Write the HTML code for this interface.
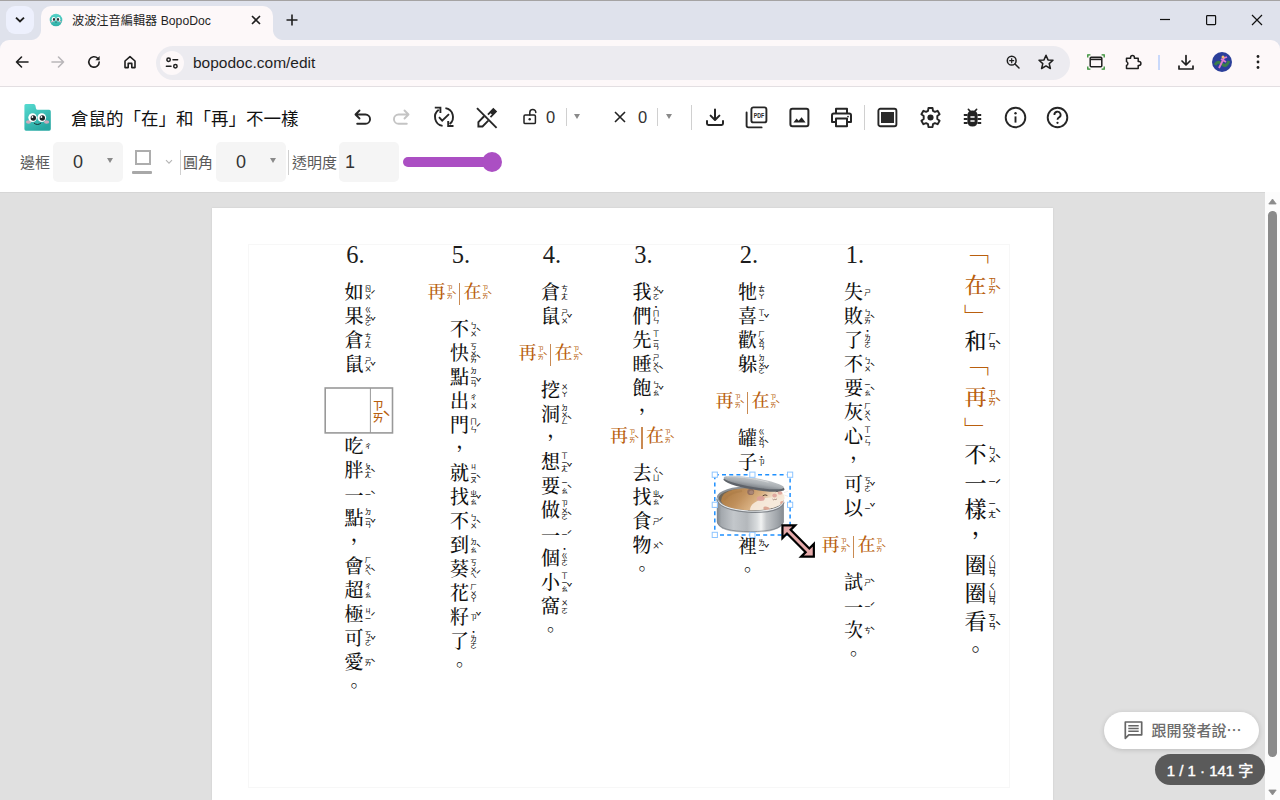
<!DOCTYPE html>
<html lang="zh-Hant">
<head>
<meta charset="utf-8">
<title>波波注音編輯器 BopoDoc</title>
<style>
*{box-sizing:border-box;margin:0;padding:0}
html,body{width:1280px;height:800px;overflow:hidden;background:#e0e0e0;font-family:"Liberation Sans","Noto Sans CJK TC",sans-serif;color:#202124}
.abs{position:absolute}
#tabstrip{position:absolute;left:0;top:0;width:1280px;height:52px;background:#dfe2ec}
#topline{position:absolute;left:0;top:0;width:1280px;height:1px;background:#a5a3a3}
#tabsearch{position:absolute;left:6px;top:6px;width:28px;height:28px;border-radius:9px;background:#edf0fd}
#tab{position:absolute;left:41px;top:6px;width:232px;height:35px;background:#fdf8f9;border-radius:10px 10px 0 0}
#tab:before,#tab:after{content:"";position:absolute;bottom:1px;width:10px;height:10px;background:radial-gradient(circle at 0 0,rgba(0,0,0,0) 9.5px,#fdf8f9 10.5px)}
#tab:before{left:-10px}
#tab:after{right:-10px;transform:scaleX(-1)}
#tabtitle{position:absolute;left:31px;top:7px;font-size:12.2px;line-height:16px;color:#1f1f1f;white-space:nowrap}
#toolbar{position:absolute;left:0;top:40px;width:1280px;height:46px;background:#fdf8f9;border-radius:9px 9px 0 0}
#tbline{position:absolute;left:0;top:86px;width:1280px;height:1px;background:#e3dfe2}
#omni{position:absolute;left:156px;top:46px;width:914px;height:34px;border-radius:17px;background:#ecebf0}
#sitechip{position:absolute;left:160px;top:51px;width:24px;height:24px;border-radius:12px;background:#fdf8f9}
#url{position:absolute;left:193px;top:53px;font-size:15.5px;line-height:20px;color:#1f1f1f;white-space:nowrap}
#app{position:absolute;left:0;top:87px;width:1280px;height:105px;background:#fff}
#appline{position:absolute;left:0;top:192px;width:1280px;height:1px;background:#d6d6d6}
#doctitle{position:absolute;left:71px;top:106px;font-size:17.5px;line-height:26px;color:#111;white-space:nowrap}
svg{position:absolute;overflow:visible}
.ic{fill:none;stroke:#1f1f1f;stroke-width:1.6;stroke-linecap:round;stroke-linejoin:round}
.lbl{position:absolute;font-size:15px;line-height:20px;color:#5a5a5a;white-space:nowrap}
.box{position:absolute;background:#f5f5f5;border-radius:5px}
.num{position:absolute;font-size:18px;line-height:22px;color:#333}
.tri{position:absolute;width:0;height:0;border-left:3.5px solid transparent;border-right:3.5px solid transparent;border-top:5px solid #8a8a8a}
.vsep{position:absolute;width:1px;background:#d0d0d0}
/*canvas*/
#page{position:absolute;left:212px;top:208px;width:841px;height:592px;background:#fff;box-shadow:0 0 2px rgba(0,0,0,.09)}
#margin{position:absolute;left:248px;top:244px;width:762px;height:544px;border:1px solid #f7f7f7}
.h{position:absolute;text-align:center;white-space:nowrap;font-family:"Liberation Serif","Noto Serif CJK SC",serif;font-weight:500}
.h.v{writing-mode:vertical-rl}
.n{position:absolute;width:40px;height:30px;text-align:center;font:24.5px/30px "Liberation Serif",serif;color:#1c1c1c}
.z{position:absolute;display:block;word-break:break-all;white-space:normal;text-align:center;font-family:"Noto Sans CJK TC","Noto Serif CJK SC",sans-serif}
.t{position:absolute;display:block;text-align:left;white-space:nowrap;font-family:"Noto Sans CJK TC","Noto Serif CJK SC",sans-serif}
#sbar{position:absolute;left:1265px;top:192px;width:15px;height:608px;background:#fcfcfc}
#sthumb{position:absolute;left:1268px;top:211px;width:8.7px;height:546px;border-radius:4.4px;background:#8b8b8b}
#chat{position:absolute;left:1104px;top:712px;width:155px;height:37px;border-radius:18.5px;background:#fff;box-shadow:0 1px 5px rgba(0,0,0,.16)}
#chat span{position:absolute;left:47.5px;top:8.5px;font-size:15px;line-height:20px;color:#6c6c6c;font-weight:500;white-space:nowrap}
#count{position:absolute;left:1155px;top:754px;width:110px;height:31px;border-radius:15.5px;background:#5a5a5a;color:#fff;font-size:15px;font-weight:400;-webkit-text-stroke:0.4px #fff;line-height:33.5px;text-align:center;white-space:nowrap}
</style>
</head>
<body>
<div id="tabstrip"></div>
<div id="topline"></div>
<div id="tabsearch"></div>
<svg style="left:14px;top:15px" width="12" height="10" viewBox="0 0 12 10"><path d="M2 2.6 L6 6.4 L10 2.6" fill="none" stroke="#1f1f1f" stroke-width="1.9"/></svg>
<div id="tab">
  <svg style="left:8.300px;top:7.200px" width="14" height="14" viewBox="0 0 14 14"><defs><linearGradient id="fv" x1="0" y1="0" x2="0" y2="1"><stop offset="0" stop-color="#57d3c9"/><stop offset="1" stop-color="#2fb0a8"/></linearGradient></defs><circle cx="7" cy="7" r="6.300" fill="url(#fv)"/><ellipse cx="4.700" cy="6.200" rx="2" ry="2.300" fill="#fff"/><ellipse cx="9.300" cy="6.200" rx="2" ry="2.300" fill="#fff"/><ellipse cx="5" cy="6.500" rx="1.100" ry="1.400" fill="#2b3135"/><ellipse cx="9" cy="6.500" rx="1.100" ry="1.400" fill="#2b3135"/><ellipse cx="2.800" cy="8.600" rx="1.300" ry="0.800" fill="#f0b7c6" opacity="0.800"/><ellipse cx="11.200" cy="8.600" rx="1.300" ry="0.800" fill="#f0b7c6" opacity="0.800"/><path d="M6.200 9 Q7 9.800 7.800 9" fill="none" stroke="#2b3135" stroke-width="0.500"/></svg>
  <div id="tabtitle">波波注音編輯器 BopoDoc</div>
  <svg style="left:209px;top:8px" width="12" height="12" viewBox="0 0 12 12"><path d="M2 2 L10 10 M10 2 L2 10" fill="none" stroke="#1f1f1f" stroke-width="1.6"/></svg>
</div>
<svg style="left:285px;top:13px" width="14" height="14" viewBox="0 0 14 14"><path d="M7 1.5 V12.5 M1.5 7 H12.5" fill="none" stroke="#1f1f1f" stroke-width="1.6"/></svg>
<!-- window controls -->
<svg style="left:1159px;top:14px" width="12" height="12" viewBox="0 0 12 12"><path d="M1 5.5 H11" stroke="#111" stroke-width="1.2" fill="none"/></svg>
<svg style="left:1205px;top:14px" width="12" height="12" viewBox="0 0 12 12"><rect x="1.6" y="1.6" width="9" height="9" rx="0.8" stroke="#111" stroke-width="1.2" fill="none"/></svg>
<svg style="left:1251px;top:14px" width="12" height="12" viewBox="0 0 12 12"><path d="M1 1 L11 11 M11 1 L1 11" stroke="#111" stroke-width="1.2" fill="none"/></svg>

<div id="toolbar"></div>
<div id="tbline"></div>
<!-- nav icons -->
<svg style="left:14px;top:54px" width="16" height="16" viewBox="0 0 16 16"><path class="ic" d="M14 8 H2.5 M7.5 3 L2.5 8 L7.5 13"/></svg>
<svg style="left:50px;top:54px" width="16" height="16" viewBox="0 0 16 16"><path class="ic" style="stroke:#b9b6b9" d="M2 8 H13.5 M8.5 3 L13.5 8 L8.5 13"/></svg>
<svg style="left:86px;top:54px" width="16" height="16" viewBox="0 0 16 16"><path class="ic" d="M13.2 8 A5.2 5.2 0 1 1 11.7 4.3"/><path d="M13.6 2 V6.2 H9.4 Z" fill="#1f1f1f"/></svg>
<svg style="left:122px;top:54px" width="16" height="16" viewBox="0 0 16 16"><path class="ic" d="M3 7 L8 2.6 L13 7 V13.6 H9.8 V9.4 H6.2 V13.6 H3 Z"/></svg>
<div id="omni"></div>
<div id="sitechip"></div>
<svg style="left:165px;top:56px" width="14" height="14" viewBox="0 0 14 14"><g fill="none" stroke="#1f1f1f" stroke-width="1.5" stroke-linecap="round"><circle cx="3.6" cy="3.8" r="1.7"/><path d="M8 3.8 H12.6"/><circle cx="10.4" cy="10.2" r="1.7"/><path d="M1.4 10.2 H6"/></g></svg>
<div id="url">bopodoc.com/edit</div>
<!-- omnibox right icons -->
<svg style="left:1005px;top:54px" width="16" height="16" viewBox="0 0 16 16"><g fill="none" stroke="#1f1f1f" stroke-width="1.5" stroke-linecap="round"><circle cx="6.7" cy="6.7" r="4.4"/><path d="M10 10 L14 14"/><path d="M4.7 6.7 H8.7 M6.7 4.7 V8.7" stroke-width="1.2"/></g></svg>
<svg style="left:1037px;top:53px" width="18" height="18" viewBox="0 0 18 18"><path class="ic" style="stroke-width:1.5" d="M9 2.2 L11 6.9 L16 7.3 L12.2 10.6 L13.4 15.5 L9 12.9 L4.6 15.5 L5.8 10.6 L2 7.3 L7 6.9 Z"/></svg>
<svg style="left:1087px;top:54px" width="18" height="16" viewBox="0 0 18 16"><rect x="3.2" y="3.2" width="11.6" height="9.6" rx="1" fill="none" stroke="#1f1f1f" stroke-width="1.5"/><path d="M3.2 5.4 H14.8" stroke="#1f1f1f" stroke-width="1.6"/><path d="M0.8 3.4 V0.8 H3.4 M14.6 0.8 H17.2 V3.4 M17.2 12.6 V15.2 H14.6 M3.4 15.2 H0.8 V12.6" fill="none" stroke="#2e8b2e" stroke-width="1.3"/></svg>
<svg style="left:1124px;top:53px" width="18" height="18" viewBox="0 0 18 18"><path class="ic" style="stroke-width:1.5" d="M2.5 5.2 H6.6 V4.4 A1.9 1.9 0 0 1 10.4 4.4 V5.2 H14.2 V8.6 H15 A1.9 1.9 0 0 1 15 12.4 H14.2 V15.6 H2.5 V12.4 A2 2 0 0 0 2.5 8.6 Z"/></svg>
<div class="abs" style="left:1158px;top:55px;width:2px;height:15px;background:#c9d9fb"></div>
<svg style="left:1177px;top:54px" width="18" height="17" viewBox="0 0 18 17"><path class="ic" style="stroke-width:1.7" d="M9 1.5 V10.5 M5 7 L9 11 L13 7 M2 12 V15 H16 V12"/></svg>
<svg style="left:1212px;top:52px" width="20" height="20" viewBox="0 0 20 20"><circle cx="10" cy="10" r="10" fill="#2b3f9a"/><path d="M3 13 Q6 8 10 12 T17 9" stroke="#3c7f4a" stroke-width="3" fill="none"/><path d="M7 16 L12 6 M9 7 L14 10 M12 6 L15 5" stroke="#e07ad0" stroke-width="1.8" fill="none"/><circle cx="11" cy="5" r="1.5" fill="#f0c070"/></svg>
<svg style="left:1256px;top:54px" width="4" height="16" viewBox="0 0 4 16"><circle cx="2" cy="2.5" r="1.4" fill="#1f1f1f"/><circle cx="2" cy="8" r="1.4" fill="#1f1f1f"/><circle cx="2" cy="13.5" r="1.4" fill="#1f1f1f"/></svg>

<div id="app"></div>
<div id="appline"></div>
<!-- app header row 1 -->
<svg style="left:24px;top:103px" width="28" height="29" viewBox="0 0 28 29">
<defs><linearGradient id="lg" x1="0" y1="0" x2="0.6" y2="1"><stop offset="0" stop-color="#56dbd0"/><stop offset="1" stop-color="#27a7a2"/></linearGradient></defs>
<path d="M1.8 1 H9.6 Q11 1 11.4 2.6 L12 5.4 Q12.3 6.8 13.6 6.8 H25.2 Q26.8 6.8 26.8 8.4 V26 Q26.8 27.8 25.2 27.8 H2 Q0.4 27.8 0.4 26 V2.6 Q0.4 1 1.8 1 Z" fill="url(#lg)"/>
<ellipse cx="4.5" cy="19" rx="2.6" ry="1.7" fill="#e7a9bd" opacity="0.85"/><ellipse cx="22.6" cy="19" rx="2.6" ry="1.7" fill="#e7a9bd" opacity="0.85"/>
<circle cx="8.6" cy="14.6" r="4.3" fill="#fff"/><circle cx="17.8" cy="14.6" r="4.3" fill="#fff"/>
<circle cx="9.3" cy="15" r="2.7" fill="#1d2428"/><circle cx="18.3" cy="15" r="2.7" fill="#1d2428"/>
<circle cx="8.4" cy="14" r="0.9" fill="#fff"/><circle cx="17.4" cy="14" r="0.9" fill="#fff"/>
<path d="M10.2 20.2 Q13.4 23 16.8 20.2" fill="none" stroke="#1d2428" stroke-width="0.9" stroke-linecap="round"/>
</svg>
<div id="doctitle">倉鼠的「在」和「再」不一樣</div>
<!-- undo / redo -->
<svg style="left:353px;top:108px" width="20" height="20" viewBox="0 0 20 20"><path d="M6.5 2.5 L2.5 6.5 L6.5 10.5 M2.8 6.5 H12.4 A4.6 4.6 0 0 1 12.4 15.8 H4.2" fill="none" stroke="#262626" stroke-width="1.9" stroke-linecap="round" stroke-linejoin="round"/></svg>
<svg style="left:391px;top:108px" width="20" height="20" viewBox="0 0 20 20"><path d="M13.5 2.5 L17.5 6.5 L13.5 10.5 M17.2 6.5 H7.6 A4.6 4.6 0 0 0 7.6 15.8 H15.8" fill="none" stroke="#c4c4c4" stroke-width="1.9" stroke-linecap="round" stroke-linejoin="round"/></svg>
<!-- sync check -->
<svg style="left:432.3px;top:105.300px" width="24" height="24" viewBox="0 0 24 24"><g fill="none" stroke="#262626" stroke-width="1.900" stroke-linejoin="miter"><path d="M6.710 4.720 A9 9 0 0 0 10.590 20.890"/><path d="M13.410 3.110 A9 9 0 0 1 17.660 18.990"/><path d="M2.800 2.600 H8.400 V8"/><path d="M21.500 21 H16.200 V16"/><path d="M7 12.200 L10.200 15.600 L17 9.150"/></g></svg>
<!-- pen off -->
<svg style="left:475px;top:106px" width="24" height="24" viewBox="0 0 24 24"><g fill="none" stroke="#262626" stroke-width="1.900" stroke-linejoin="miter"><path d="M2 2.200 L21.600 21.800"/><path d="M9.100 10.250 L3.400 16.200 V20.500 H7.500 L13.300 14.700"/></g><path d="M18.300 1.700 L22.200 5.600 L16.100 11.700 L14.900 10.500 L16.900 8.500 L15.600 7.200 L13.600 9.200 L12.300 7.900 Z" fill="#262626"/></svg>
<!-- lock open -->
<svg style="left:523px;top:108px" width="16" height="17" viewBox="0 0 16 17"><g fill="none" stroke="#222" stroke-width="1.5" stroke-linejoin="round" stroke-linecap="round"><rect x="1" y="7" width="11.4" height="8.6" rx="1.2"/><path d="M6.8 7 V4.4 A3 3 0 0 1 12.8 4.4"/></g><circle cx="6.7" cy="11.3" r="1.2" fill="#222"/></svg>
<div class="num" style="left:546px;top:106px;font-size:16.5px;color:#333">0</div>
<div class="vsep" style="left:566px;top:108px;height:18px"></div>
<div class="tri" style="left:574px;top:114px"></div>
<svg style="left:614px;top:111px" width="12" height="12" viewBox="0 0 12 12"><path d="M1 1 L11 11 M11 1 L1 11" stroke="#222" stroke-width="1.6" fill="none"/></svg>
<div class="num" style="left:638px;top:106px;font-size:16.5px;color:#333">0</div>
<div class="vsep" style="left:657px;top:108px;height:18px"></div>
<div class="tri" style="left:666px;top:114px"></div>
<div class="vsep" style="left:691px;top:105px;height:25px"></div>
<!-- download -->
<svg style="left:705px;top:108px" width="20" height="20" viewBox="0 0 20 20"><path d="M10 1.6 V11.6 M5.6 7.6 L10 12 L14.4 7.6 M2 13 V15.6 Q2 17 3.4 17 H16.6 Q18 17 18 15.6 V13" fill="none" stroke="#262626" stroke-width="2" stroke-linecap="round" stroke-linejoin="round"/></svg>
<!-- pdf -->
<svg style="left:745px;top:106px" width="23" height="23" viewBox="0 0 23 23"><g fill="none" stroke="#262626" stroke-width="1.9" stroke-linecap="round" stroke-linejoin="round"><rect x="6.4" y="1.4" width="15" height="15" rx="2"/><path d="M1.6 6.4 V19.6 Q1.6 21.4 3.4 21.4 H16.6"/></g><text x="13.9" y="11.7" text-anchor="middle" font-family="Liberation Sans,sans-serif" font-weight="bold" font-size="7.4" fill="#262626" textLength="10.5" lengthAdjust="spacingAndGlyphs">PDF</text></svg>
<!-- image -->
<svg style="left:789px;top:107px" width="21" height="21" viewBox="0 0 21 21"><rect x="1.4" y="1.8" width="18" height="17.4" rx="2" fill="none" stroke="#262626" stroke-width="2"/><path d="M4.4 15.4 L7.6 11.4 L9.6 13.8 L12.6 10.2 L16.6 15.4 Z" fill="#222"/></svg>
<!-- print -->
<svg style="left:830px;top:107px" width="23" height="21" viewBox="0 0 23 21"><g fill="none" stroke="#262626" stroke-width="2" stroke-linejoin="round"><path d="M6 6.4 V1.8 H17 V6.4"/><path d="M6 15 H2 V8.4 Q2 6.6 3.8 6.6 H19.2 Q21 6.6 21 8.4 V15 H17"/><rect x="6" y="11.6" width="11" height="7.6"/></g><circle cx="18" cy="9.6" r="0.9" fill="#222"/></svg>
<div class="vsep" style="left:864px;top:105px;height:25px"></div>
<!-- fullscreen rect -->
<svg style="left:877px;top:107px" width="21" height="21" viewBox="0 0 21 21"><rect x="1.4" y="1.8" width="18" height="17.4" rx="2" fill="none" stroke="#262626" stroke-width="1.9"/><rect x="4" y="5" width="13" height="11" fill="#2a2a2a"/></svg>
<!-- gear -->
<svg style="left:919px;top:106px" width="23" height="23" viewBox="0 0 24 24"><path fill="none" stroke="#262626" stroke-width="2" stroke-linejoin="round" d="M9.9 2 H14.1 L14.6 5 L16.6 6.1 L19.4 5 L21.5 8.6 L19.1 10.5 V13.5 L21.5 15.4 L19.4 19 L16.6 17.9 L14.6 19 L14.1 22 H9.9 L9.4 19 L7.4 17.9 L4.6 19 L2.5 15.4 L4.9 13.5 V10.500 L2.5 8.6 L4.6 5 L7.4 6.1 L9.4 5 Z"/><circle cx="12" cy="12" r="3.2" fill="#222"/></svg>
<!-- bug -->
<svg style="left:963px;top:107px" width="19" height="21" viewBox="0 0 19 21"><path d="M5.4 2.4 L7.2 4.2 M13.6 2.4 L11.8 4.2" stroke="#222" stroke-width="1.6" fill="none" stroke-linecap="round"/><path d="M9.500 3.6 Q14.6 3.600 14.600 9 V14 Q14.6 19.6 9.500 19.600 Q4.4 19.6 4.400 14 V9 Q4.4 3.6 9.500 3.600 Z" fill="#222"/><path d="M0.800 8 H4.6 M0.800 12 H4.6 M0.800 16 H4.6 M14.4 8 H18.2 M14.4 12 H18.2 M14.4 16 H18.2" stroke="#262626" stroke-width="1.9" fill="none"/><path d="M7.4 10 H11.6 M7.4 14 H11.6" stroke="#fff" stroke-width="1.6" fill="none"/></svg>
<!-- info -->
<svg style="left:1004px;top:106px" width="23" height="23" viewBox="0 0 23 23"><circle cx="11.5" cy="11.500" r="9.8" fill="none" stroke="#262626" stroke-width="1.9"/><path d="M11.5 10.400 V16.600" stroke="#222" stroke-width="1.9" fill="none"/><circle cx="11.5" cy="7.2" r="1.2" fill="#222"/></svg>
<!-- help -->
<svg style="left:1046px;top:106px" width="23" height="23" viewBox="0 0 23 23"><circle cx="11.5" cy="11.500" r="9.8" fill="none" stroke="#262626" stroke-width="1.9"/><path d="M8.400 9 A3.100 3.100 0 1 1 12.800 11.600 Q11.5 12.400 11.500 13.800" stroke="#222" stroke-width="1.800" fill="none"/><circle cx="11.5" cy="16.800" r="1.150" fill="#222"/></svg>

<!-- app header row 2 -->
<div class="lbl" style="left:20px;top:153px">邊框</div>
<div class="box" style="left:53px;top:142px;width:70px;height:40px"></div>
<div class="num" style="left:73px;top:151px">0</div>
<div class="tri" style="left:107px;top:158px"></div>
<div class="abs" style="left:135px;top:150px;width:15.5px;height:14.5px;border:2px solid #adadad"></div>
<div class="abs" style="left:132px;top:171px;width:20px;height:3px;background:#a8a8a8;border-radius:1px"></div>
<svg style="left:165px;top:159px" width="8" height="6" viewBox="0 0 8 6"><path d="M1 1.200 L4 4.200 L7 1.200" fill="none" stroke="#b5b5b5" stroke-width="1.100"/></svg>
<div class="vsep" style="left:180px;top:150px;height:25px"></div>
<div class="lbl" style="left:183px;top:153px">圓角</div>
<div class="box" style="left:216px;top:142px;width:70px;height:40px"></div>
<div class="num" style="left:236px;top:151px">0</div>
<div class="tri" style="left:270px;top:158px"></div>
<div class="vsep" style="left:288px;top:150px;height:25px"></div>
<div class="lbl" style="left:292px;top:153px">透明度</div>
<div class="box" style="left:339px;top:142px;width:60px;height:40px"></div>
<div class="num" style="left:345px;top:151px">1</div>
<div class="abs" style="left:403px;top:157px;width:96px;height:10px;border-radius:5px;background:#ab4fc3"></div>
<div class="abs" style="left:482px;top:152px;width:20px;height:20px;border-radius:10px;background:#ab4fc3"></div>
<div id="page"></div>
<div id="margin"></div>
<div class="n" style="left:335.5px;top:239.5px">6.</div>
<div class="h" style="left:343.5px;top:282.2px;width:21px;height:21px;font-size:19px;line-height:21px;color:#111">如<span class="z" style="left:21.2px;top:1.7px;width:6.6px;font-size:6.6px;line-height:8px">ㄖㄨ</span><span class="t" style="left:26.4px;top:9px;font-size:9.9px;line-height:9.9px">ˊ</span></div>
<div class="h" style="left:343.5px;top:306.2px;width:21px;height:21px;font-size:19px;line-height:21px;color:#111">果<span class="z" style="left:21.2px;top:-0.2px;width:6.6px;font-size:6.6px;line-height:6.6px">ㄍㄨㄛ</span><span class="t" style="left:26.4px;top:11.9px;font-size:9.9px;line-height:9.9px">ˇ</span></div>
<div class="h" style="left:343.5px;top:330.2px;width:21px;height:21px;font-size:19px;line-height:21px;color:#111">倉<span class="z" style="left:21.2px;top:1.7px;width:6.6px;font-size:6.6px;line-height:8px">ㄘㄤ</span></div>
<div class="h" style="left:343.5px;top:354.2px;width:21px;height:21px;font-size:19px;line-height:21px;color:#111">鼠<span class="z" style="left:21.2px;top:1.7px;width:6.6px;font-size:6.6px;line-height:8px">ㄕㄨ</span><span class="t" style="left:26.4px;top:8.6px;font-size:9.9px;line-height:9.9px">ˇ</span></div>
<div class="h" style="left:343.5px;top:436.2px;width:21px;height:21px;font-size:19px;line-height:21px;color:#111">吃<span class="z" style="left:21.2px;top:5.7px;width:6.6px;font-size:6.6px;line-height:8px">ㄔ</span></div>
<div class="h" style="left:343.5px;top:460.2px;width:21px;height:21px;font-size:19px;line-height:21px;color:#111">胖<span class="z" style="left:21.2px;top:1.7px;width:6.6px;font-size:6.6px;line-height:8px">ㄆㄤ</span><span class="t" style="left:26.4px;top:8.8px;font-size:9.9px;line-height:9.9px">ˋ</span></div>
<div class="h" style="left:343.5px;top:485.5px;width:21px;height:21px;font-size:19px;line-height:21px;color:#111">一<span class="z" style="left:21.2px;top:4.4px;width:6.6px;font-size:6.6px;line-height:8px">ㄧ</span><span class="t" style="left:26.4px;top:5.1px;font-size:9.9px;line-height:9.9px">ˋ</span></div>
<div class="h" style="left:343.5px;top:508.2px;width:21px;height:21px;font-size:19px;line-height:21px;color:#111">點<span class="z" style="left:21.2px;top:-0.2px;width:6.6px;font-size:6.6px;line-height:6.6px">ㄉㄧㄢ</span><span class="t" style="left:26.4px;top:11.9px;font-size:9.9px;line-height:9.9px">ˇ</span></div>
<div class="h" style="left:350.1px;top:523.5px;width:21px;height:21px;font-size:19px;line-height:21px;color:#111">，</div>
<div class="h" style="left:343.5px;top:556.2px;width:21px;height:21px;font-size:19px;line-height:21px;color:#111">會<span class="z" style="left:21.2px;top:-0.2px;width:6.6px;font-size:6.6px;line-height:6.6px">ㄏㄨㄟ</span><span class="t" style="left:26.4px;top:12.1px;font-size:9.9px;line-height:9.9px">ˋ</span></div>
<div class="h" style="left:343.5px;top:580.2px;width:21px;height:21px;font-size:19px;line-height:21px;color:#111">超<span class="z" style="left:21.2px;top:1.7px;width:6.6px;font-size:6.6px;line-height:8px">ㄔㄠ</span></div>
<div class="h" style="left:343.5px;top:604.2px;width:21px;height:21px;font-size:19px;line-height:21px;color:#111">極<span class="z" style="left:21.2px;top:1.7px;width:6.6px;font-size:6.6px;line-height:8px">ㄐㄧ</span><span class="t" style="left:26.4px;top:9px;font-size:9.9px;line-height:9.9px">ˊ</span></div>
<div class="h" style="left:343.5px;top:628.2px;width:21px;height:21px;font-size:19px;line-height:21px;color:#111">可<span class="z" style="left:21.2px;top:1.7px;width:6.6px;font-size:6.6px;line-height:8px">ㄎㄜ</span><span class="t" style="left:26.4px;top:8.6px;font-size:9.9px;line-height:9.9px">ˇ</span></div>
<div class="h" style="left:343.5px;top:652.2px;width:21px;height:21px;font-size:19px;line-height:21px;color:#111">愛<span class="z" style="left:21.2px;top:5.7px;width:6.6px;font-size:6.6px;line-height:8px">ㄞ</span><span class="t" style="left:26.4px;top:6.4px;font-size:9.9px;line-height:9.9px">ˋ</span></div>
<div class="h" style="left:349.5px;top:670.3px;width:21px;height:21px;font-size:19px;line-height:21px;color:#111">。</div>
<svg style="left:320px;top:383px" width="80" height="56" viewBox="0 0 80 56"><rect x="5.2" y="5" width="67.3" height="44.9" fill="#fff" stroke="#999" stroke-width="1.6"/><path d="M50.4 5 V50" stroke="#999" stroke-width="1" fill="none"/></svg>
<div class="h" style="left:370px;top:388px;width:22px;height:46px;color:#b95f0e"><span class="z" style="left:2.6px;top:10.8px;width:11.2px;font-size:11.2px;line-height:12.3px">ㄗㄞ</span><span class="t" style="left:12px;top:21.1px;font-size:15px;line-height:15px">ˋ</span></div>
<div class="n" style="left:441px;top:239.5px">5.</div>
<div class="abs" style="left:458.6px;top:283px;width:1.7px;height:22px;background:#c98a52"></div>
<div class="h" style="left:426.5px;top:282.3px;width:20px;height:20px;font-size:18px;line-height:20px;color:#b95f0e">再<span class="z" style="left:20.2px;top:1.7px;width:6px;font-size:6px;line-height:7.6px">ㄗㄞ</span><span class="t" style="left:24.9px;top:8.5px;font-size:9px;line-height:9px">ˋ</span></div>
<div class="h" style="left:462.5px;top:282.3px;width:20px;height:20px;font-size:18px;line-height:20px;color:#b95f0e">在<span class="z" style="left:19.8px;top:1.7px;width:6px;font-size:6px;line-height:7.6px">ㄗㄞ</span><span class="t" style="left:24.5px;top:8.5px;font-size:9px;line-height:9px">ˋ</span></div>
<div class="h" style="left:449px;top:319.2px;width:21px;height:21px;font-size:19px;line-height:21px;color:#111">不<span class="z" style="left:21.2px;top:1.7px;width:6.6px;font-size:6.6px;line-height:8px">ㄅㄨ</span><span class="t" style="left:26.4px;top:8.8px;font-size:9.9px;line-height:9.9px">ˋ</span></div>
<div class="h" style="left:449px;top:343.2px;width:21px;height:21px;font-size:19px;line-height:21px;color:#111">快<span class="z" style="left:21.2px;top:-0.2px;width:6.6px;font-size:6.6px;line-height:6.6px">ㄎㄨㄞ</span><span class="t" style="left:26.4px;top:12.1px;font-size:9.9px;line-height:9.9px">ˋ</span></div>
<div class="h" style="left:449px;top:367.2px;width:21px;height:21px;font-size:19px;line-height:21px;color:#111">點<span class="z" style="left:21.2px;top:-0.2px;width:6.6px;font-size:6.6px;line-height:6.6px">ㄉㄧㄢ</span><span class="t" style="left:26.4px;top:11.9px;font-size:9.9px;line-height:9.9px">ˇ</span></div>
<div class="h" style="left:449px;top:391.2px;width:21px;height:21px;font-size:19px;line-height:21px;color:#111">出<span class="z" style="left:21.2px;top:1.7px;width:6.6px;font-size:6.6px;line-height:8px">ㄔㄨ</span></div>
<div class="h" style="left:449px;top:415.2px;width:21px;height:21px;font-size:19px;line-height:21px;color:#111">門<span class="z" style="left:21.2px;top:1.7px;width:6.6px;font-size:6.6px;line-height:8px">ㄇㄣ</span><span class="t" style="left:26.4px;top:9px;font-size:9.9px;line-height:9.9px">ˊ</span></div>
<div class="h" style="left:455.6px;top:430.5px;width:21px;height:21px;font-size:19px;line-height:21px;color:#111">，</div>
<div class="h" style="left:449px;top:463.2px;width:21px;height:21px;font-size:19px;line-height:21px;color:#111">就<span class="z" style="left:21.2px;top:-0.2px;width:6.6px;font-size:6.6px;line-height:6.6px">ㄐㄧㄡ</span><span class="t" style="left:26.4px;top:12.1px;font-size:9.9px;line-height:9.9px">ˋ</span></div>
<div class="h" style="left:449px;top:487.2px;width:21px;height:21px;font-size:19px;line-height:21px;color:#111">找<span class="z" style="left:21.2px;top:1.7px;width:6.6px;font-size:6.6px;line-height:8px">ㄓㄠ</span><span class="t" style="left:26.4px;top:8.6px;font-size:9.9px;line-height:9.9px">ˇ</span></div>
<div class="h" style="left:449px;top:511.2px;width:21px;height:21px;font-size:19px;line-height:21px;color:#111">不<span class="z" style="left:21.2px;top:1.7px;width:6.6px;font-size:6.6px;line-height:8px">ㄅㄨ</span><span class="t" style="left:26.4px;top:8.8px;font-size:9.9px;line-height:9.9px">ˋ</span></div>
<div class="h" style="left:449px;top:535.2px;width:21px;height:21px;font-size:19px;line-height:21px;color:#111">到<span class="z" style="left:21.2px;top:1.7px;width:6.6px;font-size:6.6px;line-height:8px">ㄉㄠ</span><span class="t" style="left:26.4px;top:8.8px;font-size:9.9px;line-height:9.9px">ˋ</span></div>
<div class="h" style="left:449px;top:559.2px;width:21px;height:21px;font-size:19px;line-height:21px;color:#111">葵<span class="z" style="left:21.2px;top:-0.2px;width:6.6px;font-size:6.6px;line-height:6.6px">ㄎㄨㄟ</span><span class="t" style="left:26.4px;top:12.3px;font-size:9.9px;line-height:9.9px">ˊ</span></div>
<div class="h" style="left:449px;top:583.2px;width:21px;height:21px;font-size:19px;line-height:21px;color:#111">花<span class="z" style="left:21.2px;top:-0.2px;width:6.6px;font-size:6.6px;line-height:6.6px">ㄏㄨㄚ</span></div>
<div class="h" style="left:449px;top:607.2px;width:21px;height:21px;font-size:19px;line-height:21px;color:#111">籽<span class="z" style="left:21.2px;top:5.7px;width:6.6px;font-size:6.6px;line-height:8px">ㄗ</span><span class="t" style="left:26.4px;top:6.2px;font-size:9.9px;line-height:9.9px">ˇ</span></div>
<div class="h" style="left:449px;top:631.2px;width:21px;height:21px;font-size:19px;line-height:21px;color:#111">了<span class="z" style="left:21.2px;top:3.7px;width:6.6px;font-size:6.6px;line-height:7.1px">ㄌㄜ</span><span class="t" style="left:22px;top:-2.8px;font-size:9.9px;line-height:9.9px">˙</span></div>
<div class="h" style="left:455px;top:649.3px;width:21px;height:21px;font-size:19px;line-height:21px;color:#111">。</div>
<div class="n" style="left:532px;top:239.5px">4.</div>
<div class="h" style="left:540px;top:282.2px;width:21px;height:21px;font-size:19px;line-height:21px;color:#111">倉<span class="z" style="left:21.2px;top:1.7px;width:6.6px;font-size:6.6px;line-height:8px">ㄘㄤ</span></div>
<div class="h" style="left:540px;top:306.2px;width:21px;height:21px;font-size:19px;line-height:21px;color:#111">鼠<span class="z" style="left:21.2px;top:1.7px;width:6.6px;font-size:6.6px;line-height:8px">ㄕㄨ</span><span class="t" style="left:26.4px;top:8.6px;font-size:9.9px;line-height:9.9px">ˇ</span></div>
<div class="abs" style="left:549.6px;top:344px;width:1.7px;height:22px;background:#c98a52"></div>
<div class="h" style="left:517.5px;top:343.3px;width:20px;height:20px;font-size:18px;line-height:20px;color:#b95f0e">再<span class="z" style="left:20.2px;top:1.7px;width:6px;font-size:6px;line-height:7.6px">ㄗㄞ</span><span class="t" style="left:24.9px;top:8.5px;font-size:9px;line-height:9px">ˋ</span></div>
<div class="h" style="left:553.5px;top:343.3px;width:20px;height:20px;font-size:18px;line-height:20px;color:#b95f0e">在<span class="z" style="left:19.8px;top:1.7px;width:6px;font-size:6px;line-height:7.6px">ㄗㄞ</span><span class="t" style="left:24.5px;top:8.5px;font-size:9px;line-height:9px">ˋ</span></div>
<div class="h" style="left:540px;top:380.2px;width:21px;height:21px;font-size:19px;line-height:21px;color:#111">挖<span class="z" style="left:21.2px;top:1.7px;width:6.6px;font-size:6.6px;line-height:8px">ㄨㄚ</span></div>
<div class="h" style="left:540px;top:404.2px;width:21px;height:21px;font-size:19px;line-height:21px;color:#111">洞<span class="z" style="left:21.2px;top:-0.2px;width:6.6px;font-size:6.6px;line-height:6.6px">ㄉㄨㄥ</span><span class="t" style="left:26.4px;top:12.1px;font-size:9.9px;line-height:9.9px">ˋ</span></div>
<div class="h" style="left:546.6px;top:419.5px;width:21px;height:21px;font-size:19px;line-height:21px;color:#111">，</div>
<div class="h" style="left:540px;top:452.2px;width:21px;height:21px;font-size:19px;line-height:21px;color:#111">想<span class="z" style="left:21.2px;top:-0.2px;width:6.6px;font-size:6.6px;line-height:6.6px">ㄒㄧㄤ</span><span class="t" style="left:26.4px;top:11.9px;font-size:9.9px;line-height:9.9px">ˇ</span></div>
<div class="h" style="left:540px;top:476.2px;width:21px;height:21px;font-size:19px;line-height:21px;color:#111">要<span class="z" style="left:21.2px;top:1.7px;width:6.6px;font-size:6.6px;line-height:8px">ㄧㄠ</span><span class="t" style="left:26.4px;top:8.8px;font-size:9.9px;line-height:9.9px">ˋ</span></div>
<div class="h" style="left:540px;top:500.2px;width:21px;height:21px;font-size:19px;line-height:21px;color:#111">做<span class="z" style="left:21.2px;top:-0.2px;width:6.6px;font-size:6.6px;line-height:6.6px">ㄗㄨㄛ</span><span class="t" style="left:26.4px;top:12.1px;font-size:9.9px;line-height:9.9px">ˋ</span></div>
<div class="h" style="left:540px;top:525.5px;width:21px;height:21px;font-size:19px;line-height:21px;color:#111">一<span class="z" style="left:21.2px;top:4.4px;width:6.6px;font-size:6.6px;line-height:8px">ㄧ</span><span class="t" style="left:26.4px;top:5.3px;font-size:9.9px;line-height:9.9px">ˊ</span></div>
<div class="h" style="left:540px;top:548.2px;width:21px;height:21px;font-size:19px;line-height:21px;color:#111">個<span class="z" style="left:21.2px;top:3.7px;width:6.6px;font-size:6.6px;line-height:7.1px">ㄍㄜ</span><span class="t" style="left:22px;top:-2.8px;font-size:9.9px;line-height:9.9px">˙</span></div>
<div class="h" style="left:540px;top:572.2px;width:21px;height:21px;font-size:19px;line-height:21px;color:#111">小<span class="z" style="left:21.2px;top:-0.2px;width:6.6px;font-size:6.6px;line-height:6.6px">ㄒㄧㄠ</span><span class="t" style="left:26.4px;top:11.9px;font-size:9.9px;line-height:9.9px">ˇ</span></div>
<div class="h" style="left:540px;top:596.2px;width:21px;height:21px;font-size:19px;line-height:21px;color:#111">窩<span class="z" style="left:21.2px;top:1.7px;width:6.6px;font-size:6.6px;line-height:8px">ㄨㄛ</span></div>
<div class="h" style="left:546px;top:614.3px;width:21px;height:21px;font-size:19px;line-height:21px;color:#111">。</div>
<div class="n" style="left:623.5px;top:239.5px">3.</div>
<div class="h" style="left:631.5px;top:282.2px;width:21px;height:21px;font-size:19px;line-height:21px;color:#111">我<span class="z" style="left:21.2px;top:1.7px;width:6.6px;font-size:6.6px;line-height:8px">ㄨㄛ</span><span class="t" style="left:26.4px;top:8.6px;font-size:9.9px;line-height:9.9px">ˇ</span></div>
<div class="h" style="left:631.5px;top:306.2px;width:21px;height:21px;font-size:19px;line-height:21px;color:#111">們<span class="z" style="left:21.2px;top:3.7px;width:6.6px;font-size:6.6px;line-height:7.1px">ㄇㄣ</span><span class="t" style="left:22px;top:-2.8px;font-size:9.9px;line-height:9.9px">˙</span></div>
<div class="h" style="left:631.5px;top:330.2px;width:21px;height:21px;font-size:19px;line-height:21px;color:#111">先<span class="z" style="left:21.2px;top:-0.2px;width:6.6px;font-size:6.6px;line-height:6.6px">ㄒㄧㄢ</span></div>
<div class="h" style="left:631.5px;top:354.2px;width:21px;height:21px;font-size:19px;line-height:21px;color:#111">睡<span class="z" style="left:21.2px;top:-0.2px;width:6.6px;font-size:6.6px;line-height:6.6px">ㄕㄨㄟ</span><span class="t" style="left:26.4px;top:12.1px;font-size:9.9px;line-height:9.9px">ˋ</span></div>
<div class="h" style="left:631.5px;top:378.2px;width:21px;height:21px;font-size:19px;line-height:21px;color:#111">飽<span class="z" style="left:21.2px;top:1.7px;width:6.6px;font-size:6.6px;line-height:8px">ㄅㄠ</span><span class="t" style="left:26.4px;top:8.6px;font-size:9.9px;line-height:9.9px">ˇ</span></div>
<div class="h" style="left:638.1px;top:393.5px;width:21px;height:21px;font-size:19px;line-height:21px;color:#111">，</div>
<div class="abs" style="left:641.1px;top:427px;width:1.7px;height:22px;background:#c98a52"></div>
<div class="h" style="left:609px;top:426.3px;width:20px;height:20px;font-size:18px;line-height:20px;color:#b95f0e">再<span class="z" style="left:20.2px;top:1.7px;width:6px;font-size:6px;line-height:7.6px">ㄗㄞ</span><span class="t" style="left:24.9px;top:8.5px;font-size:9px;line-height:9px">ˋ</span></div>
<div class="h" style="left:645px;top:426.3px;width:20px;height:20px;font-size:18px;line-height:20px;color:#b95f0e">在<span class="z" style="left:19.8px;top:1.7px;width:6px;font-size:6px;line-height:7.6px">ㄗㄞ</span><span class="t" style="left:24.5px;top:8.5px;font-size:9px;line-height:9px">ˋ</span></div>
<div class="h" style="left:631.5px;top:463.2px;width:21px;height:21px;font-size:19px;line-height:21px;color:#111">去<span class="z" style="left:21.2px;top:1.7px;width:6.6px;font-size:6.6px;line-height:8px">ㄑㄩ</span><span class="t" style="left:26.4px;top:8.8px;font-size:9.9px;line-height:9.9px">ˋ</span></div>
<div class="h" style="left:631.5px;top:487.2px;width:21px;height:21px;font-size:19px;line-height:21px;color:#111">找<span class="z" style="left:21.2px;top:1.7px;width:6.6px;font-size:6.6px;line-height:8px">ㄓㄠ</span><span class="t" style="left:26.4px;top:8.6px;font-size:9.9px;line-height:9.9px">ˇ</span></div>
<div class="h" style="left:631.5px;top:511.2px;width:21px;height:21px;font-size:19px;line-height:21px;color:#111">食<span class="z" style="left:21.2px;top:5.7px;width:6.6px;font-size:6.6px;line-height:8px">ㄕ</span><span class="t" style="left:26.4px;top:6.7px;font-size:9.9px;line-height:9.9px">ˊ</span></div>
<div class="h" style="left:631.5px;top:535.2px;width:21px;height:21px;font-size:19px;line-height:21px;color:#111">物<span class="z" style="left:21.2px;top:5.7px;width:6.6px;font-size:6.6px;line-height:8px">ㄨ</span><span class="t" style="left:26.4px;top:6.4px;font-size:9.9px;line-height:9.9px">ˋ</span></div>
<div class="h" style="left:637.5px;top:553.3px;width:21px;height:21px;font-size:19px;line-height:21px;color:#111">。</div>
<div class="n" style="left:729px;top:239.5px">2.</div>
<div class="h" style="left:737px;top:282.2px;width:21px;height:21px;font-size:19px;line-height:21px;color:#111">牠<span class="z" style="left:21.2px;top:1.7px;width:6.6px;font-size:6.6px;line-height:8px">ㄊㄚ</span></div>
<div class="h" style="left:737px;top:306.2px;width:21px;height:21px;font-size:19px;line-height:21px;color:#111">喜<span class="z" style="left:21.2px;top:1.7px;width:6.6px;font-size:6.6px;line-height:8px">ㄒㄧ</span><span class="t" style="left:26.4px;top:8.6px;font-size:9.9px;line-height:9.9px">ˇ</span></div>
<div class="h" style="left:737px;top:330.2px;width:21px;height:21px;font-size:19px;line-height:21px;color:#111">歡<span class="z" style="left:21.2px;top:-0.2px;width:6.6px;font-size:6.6px;line-height:6.6px">ㄏㄨㄢ</span></div>
<div class="h" style="left:737px;top:354.2px;width:21px;height:21px;font-size:19px;line-height:21px;color:#111">躲<span class="z" style="left:21.2px;top:-0.2px;width:6.6px;font-size:6.6px;line-height:6.6px">ㄉㄨㄛ</span><span class="t" style="left:26.4px;top:11.9px;font-size:9.9px;line-height:9.9px">ˇ</span></div>
<div class="abs" style="left:746.6px;top:392px;width:1.7px;height:22px;background:#c98a52"></div>
<div class="h" style="left:714.5px;top:391.3px;width:20px;height:20px;font-size:18px;line-height:20px;color:#b95f0e">再<span class="z" style="left:20.2px;top:1.7px;width:6px;font-size:6px;line-height:7.6px">ㄗㄞ</span><span class="t" style="left:24.9px;top:8.5px;font-size:9px;line-height:9px">ˋ</span></div>
<div class="h" style="left:750.5px;top:391.3px;width:20px;height:20px;font-size:18px;line-height:20px;color:#b95f0e">在<span class="z" style="left:19.8px;top:1.7px;width:6px;font-size:6px;line-height:7.6px">ㄗㄞ</span><span class="t" style="left:24.5px;top:8.5px;font-size:9px;line-height:9px">ˋ</span></div>
<div class="h" style="left:737px;top:428.2px;width:21px;height:21px;font-size:19px;line-height:21px;color:#111">罐<span class="z" style="left:21.2px;top:-0.2px;width:6.6px;font-size:6.6px;line-height:6.6px">ㄍㄨㄢ</span><span class="t" style="left:26.4px;top:12.1px;font-size:9.9px;line-height:9.9px">ˋ</span></div>
<div class="h" style="left:737px;top:452.2px;width:21px;height:21px;font-size:19px;line-height:21px;color:#111">子<span class="z" style="left:21.2px;top:7.2px;width:6.6px;font-size:6.6px;line-height:7.1px">ㄗ</span><span class="t" style="left:22px;top:0.8px;font-size:9.9px;line-height:9.9px">˙</span></div>
<div class="h" style="left:737px;top:536.2px;width:21px;height:21px;font-size:19px;line-height:21px;color:#111">裡<span class="z" style="left:21.2px;top:1.7px;width:6.6px;font-size:6.6px;line-height:8px">ㄌㄧ</span><span class="t" style="left:26.4px;top:8.6px;font-size:9.9px;line-height:9.9px">ˇ</span></div>
<div class="h" style="left:743px;top:554.3px;width:21px;height:21px;font-size:19px;line-height:21px;color:#111">。</div>
<div class="n" style="left:835px;top:239.5px">1.</div>
<div class="h" style="left:843px;top:282.2px;width:21px;height:21px;font-size:19px;line-height:21px;color:#111">失<span class="z" style="left:21.2px;top:5.7px;width:6.6px;font-size:6.6px;line-height:8px">ㄕ</span></div>
<div class="h" style="left:843px;top:306.2px;width:21px;height:21px;font-size:19px;line-height:21px;color:#111">敗<span class="z" style="left:21.2px;top:1.7px;width:6.6px;font-size:6.6px;line-height:8px">ㄅㄞ</span><span class="t" style="left:26.4px;top:8.8px;font-size:9.9px;line-height:9.9px">ˋ</span></div>
<div class="h" style="left:843px;top:330.2px;width:21px;height:21px;font-size:19px;line-height:21px;color:#111">了<span class="z" style="left:21.2px;top:3.7px;width:6.6px;font-size:6.6px;line-height:7.1px">ㄌㄜ</span><span class="t" style="left:22px;top:-2.8px;font-size:9.9px;line-height:9.9px">˙</span></div>
<div class="h" style="left:843px;top:354.2px;width:21px;height:21px;font-size:19px;line-height:21px;color:#111">不<span class="z" style="left:21.2px;top:1.7px;width:6.6px;font-size:6.6px;line-height:8px">ㄅㄨ</span><span class="t" style="left:26.4px;top:8.8px;font-size:9.9px;line-height:9.9px">ˋ</span></div>
<div class="h" style="left:843px;top:378.2px;width:21px;height:21px;font-size:19px;line-height:21px;color:#111">要<span class="z" style="left:21.2px;top:1.7px;width:6.6px;font-size:6.6px;line-height:8px">ㄧㄠ</span><span class="t" style="left:26.4px;top:8.8px;font-size:9.9px;line-height:9.9px">ˋ</span></div>
<div class="h" style="left:843px;top:402.2px;width:21px;height:21px;font-size:19px;line-height:21px;color:#111">灰<span class="z" style="left:21.2px;top:-0.2px;width:6.6px;font-size:6.6px;line-height:6.6px">ㄏㄨㄟ</span></div>
<div class="h" style="left:843px;top:426.2px;width:21px;height:21px;font-size:19px;line-height:21px;color:#111">心<span class="z" style="left:21.2px;top:-0.2px;width:6.6px;font-size:6.6px;line-height:6.6px">ㄒㄧㄣ</span></div>
<div class="h" style="left:849.6px;top:441.5px;width:21px;height:21px;font-size:19px;line-height:21px;color:#111">，</div>
<div class="h" style="left:843px;top:474.2px;width:21px;height:21px;font-size:19px;line-height:21px;color:#111">可<span class="z" style="left:21.2px;top:1.7px;width:6.6px;font-size:6.6px;line-height:8px">ㄎㄜ</span><span class="t" style="left:26.4px;top:8.6px;font-size:9.9px;line-height:9.9px">ˇ</span></div>
<div class="h" style="left:843px;top:498.2px;width:21px;height:21px;font-size:19px;line-height:21px;color:#111">以<span class="z" style="left:21.2px;top:5.7px;width:6.6px;font-size:6.6px;line-height:8px">ㄧ</span><span class="t" style="left:26.4px;top:6.2px;font-size:9.9px;line-height:9.9px">ˇ</span></div>
<div class="abs" style="left:852.6px;top:536px;width:1.7px;height:22px;background:#c98a52"></div>
<div class="h" style="left:820.5px;top:535.3px;width:20px;height:20px;font-size:18px;line-height:20px;color:#b95f0e">再<span class="z" style="left:20.2px;top:1.7px;width:6px;font-size:6px;line-height:7.6px">ㄗㄞ</span><span class="t" style="left:24.9px;top:8.5px;font-size:9px;line-height:9px">ˋ</span></div>
<div class="h" style="left:856.5px;top:535.3px;width:20px;height:20px;font-size:18px;line-height:20px;color:#b95f0e">在<span class="z" style="left:19.8px;top:1.7px;width:6px;font-size:6px;line-height:7.6px">ㄗㄞ</span><span class="t" style="left:24.5px;top:8.5px;font-size:9px;line-height:9px">ˋ</span></div>
<div class="h" style="left:843px;top:572.2px;width:21px;height:21px;font-size:19px;line-height:21px;color:#111">試<span class="z" style="left:21.2px;top:5.7px;width:6.6px;font-size:6.6px;line-height:8px">ㄕ</span><span class="t" style="left:26.4px;top:6.4px;font-size:9.9px;line-height:9.9px">ˋ</span></div>
<div class="h" style="left:843px;top:597.5px;width:21px;height:21px;font-size:19px;line-height:21px;color:#111">一<span class="z" style="left:21.2px;top:4.4px;width:6.6px;font-size:6.6px;line-height:8px">ㄧ</span><span class="t" style="left:26.4px;top:5.3px;font-size:9.9px;line-height:9.9px">ˊ</span></div>
<div class="h" style="left:843px;top:620.2px;width:21px;height:21px;font-size:19px;line-height:21px;color:#111">次<span class="z" style="left:21.2px;top:5.7px;width:6.6px;font-size:6.6px;line-height:8px">ㄘ</span><span class="t" style="left:26.4px;top:6.4px;font-size:9.9px;line-height:9.9px">ˋ</span></div>
<div class="h" style="left:849px;top:638.3px;width:21px;height:21px;font-size:19px;line-height:21px;color:#111">。</div>
<div class="h v" style="left:959.5px;top:238px;width:26px;height:26px;font-size:26px;line-height:26px;color:#b95f0e">「</div>
<div class="h" style="left:963.5px;top:274.3px;width:24px;height:24px;font-size:22px;line-height:24px;color:#b95f0e">在<span class="z" style="left:24.7px;top:1.6px;width:7.8px;font-size:7.8px;line-height:9.4px">ㄗㄞ</span><span class="t" style="left:30.9px;top:9.7px;font-size:11.7px;line-height:11.7px">ˋ</span></div>
<div class="h v" style="left:960.6px;top:304.3px;width:26px;height:26px;font-size:26px;line-height:26px;color:#b95f0e">」</div>
<div class="h" style="left:963.5px;top:329.8px;width:24px;height:24px;font-size:22px;line-height:24px;color:#111">和<span class="z" style="left:24.7px;top:1.6px;width:7.8px;font-size:7.8px;line-height:9.4px">ㄏㄢ</span><span class="t" style="left:30.9px;top:9.7px;font-size:11.7px;line-height:11.7px">ˋ</span></div>
<div class="h v" style="left:959.5px;top:350px;width:26px;height:26px;font-size:26px;line-height:26px;color:#b95f0e">「</div>
<div class="h" style="left:963.5px;top:386.3px;width:24px;height:24px;font-size:22px;line-height:24px;color:#b95f0e">再<span class="z" style="left:24.7px;top:1.6px;width:7.8px;font-size:7.8px;line-height:9.4px">ㄗㄞ</span><span class="t" style="left:30.9px;top:9.7px;font-size:11.7px;line-height:11.7px">ˋ</span></div>
<div class="h v" style="left:960.6px;top:416.5px;width:26px;height:26px;font-size:26px;line-height:26px;color:#b95f0e">」</div>
<div class="h" style="left:963.5px;top:443.3px;width:24px;height:24px;font-size:22px;line-height:24px;color:#111">不<span class="z" style="left:24.7px;top:1.6px;width:7.8px;font-size:7.8px;line-height:9.4px">ㄅㄨ</span><span class="t" style="left:30.9px;top:9.7px;font-size:11.7px;line-height:11.7px">ˋ</span></div>
<div class="h" style="left:963.5px;top:472px;width:24px;height:24px;font-size:22px;line-height:24px;color:#111">一<span class="z" style="left:24.7px;top:4.8px;width:7.8px;font-size:7.8px;line-height:9.4px">ㄧ</span><span class="t" style="left:30.9px;top:5.8px;font-size:11.7px;line-height:11.7px">ˊ</span></div>
<div class="h" style="left:963.5px;top:497.8px;width:24px;height:24px;font-size:22px;line-height:24px;color:#111">樣<span class="z" style="left:24.7px;top:1.6px;width:7.8px;font-size:7.8px;line-height:9.4px">ㄧㄤ</span><span class="t" style="left:30.9px;top:9.7px;font-size:11.7px;line-height:11.7px">ˋ</span></div>
<div class="h" style="left:971.1px;top:515.3px;width:24px;height:24px;font-size:22px;line-height:24px;color:#111">，</div>
<div class="h" style="left:963.5px;top:554.3px;width:24px;height:24px;font-size:22px;line-height:24px;color:#111">圈<span class="z" style="left:24.7px;top:-0.7px;width:7.8px;font-size:7.8px;line-height:7.8px">ㄑㄩㄢ</span></div>
<div class="h" style="left:963.5px;top:582.4px;width:24px;height:24px;font-size:22px;line-height:24px;color:#111">圈<span class="z" style="left:24.7px;top:-0.7px;width:7.8px;font-size:7.8px;line-height:7.8px">ㄑㄩㄢ</span></div>
<div class="h" style="left:963.5px;top:610.2px;width:24px;height:24px;font-size:22px;line-height:24px;color:#111">看<span class="z" style="left:24.7px;top:1.6px;width:7.8px;font-size:7.8px;line-height:9.4px">ㄎㄢ</span><span class="t" style="left:30.9px;top:9.7px;font-size:11.7px;line-height:11.7px">ˋ</span></div>
<div class="h" style="left:970.5px;top:631.2px;width:24px;height:24px;font-size:22px;line-height:24px;color:#111">。</div><!-- hamster-in-can image -->
<svg style="left:710px;top:470px" width="84" height="70" viewBox="0 0 84 70">
<defs>
<linearGradient id="can" x1="0" y1="0" x2="1" y2="0"><stop offset="0" stop-color="#7f858b"/><stop offset="0.07" stop-color="#a4a9ae"/><stop offset="0.25" stop-color="#c3c7cb"/><stop offset="0.45" stop-color="#b4b8bc"/><stop offset="0.6" stop-color="#d9dcde"/><stop offset="0.66" stop-color="#f1f2f2"/><stop offset="0.74" stop-color="#c4c7ca"/><stop offset="0.9" stop-color="#a0a5aa"/><stop offset="1" stop-color="#858a90"/></linearGradient>
<linearGradient id="fur" x1="0" y1="0.2" x2="1" y2="0.5"><stop offset="0" stop-color="#aa783f"/><stop offset="0.35" stop-color="#c0905c"/><stop offset="0.6" stop-color="#d9b081"/><stop offset="0.8" stop-color="#f1dfca"/><stop offset="1" stop-color="#f7ebdd"/></linearGradient>
<linearGradient id="lid" x1="0" y1="0" x2="0" y2="1"><stop offset="0" stop-color="#c3c7ca"/><stop offset="0.55" stop-color="#a9aeb2"/><stop offset="1" stop-color="#80858b"/></linearGradient>
<filter id="soft" x="-5%" y="-5%" width="110%" height="110%"><feGaussianBlur stdDeviation="0.35"/></filter>
</defs>
<g filter="url(#soft)">
<!-- can body -->
<path d="M6.800 28 V51.500 Q8 62.800 40.400 62.800 Q72.500 62.800 73.900 51 V31 Z" fill="url(#can)"/>
<path d="M7.200 52 Q10 61.600 40.400 61.600 Q71 61.600 73.600 51.400" fill="none" stroke="#7b8086" stroke-width="0.900" opacity="0.800"/>
<!-- rim (back) + interior -->
<g transform="rotate(3 40.350 29)">
<ellipse cx="40.350" cy="29" rx="33.600" ry="12.200" fill="#8d9297"/>
<ellipse cx="40.350" cy="29.600" rx="31.600" ry="10.800" fill="#6e6658"/>
</g>
<!-- hamster -->
<path d="M11 31 Q11.500 22 24 19.500 Q34 17.800 42 18.300 Q58 16.500 68 19.500 Q74.500 22.500 74.600 28.500 Q73 35.500 60 38.500 Q44 41.500 28 39.500 Q13 37.500 11 31 Z" fill="url(#fur)"/>
<path d="M44 33 Q52 27 62 27.500 Q70 28.500 73.500 31.500 Q70 36.500 60 38.500 Q50 40.500 40 40 Q40 36 44 33 Z" fill="#f6eadc" opacity="0.900"/>
<path d="M14 30 Q20 22 32 21" stroke="#a87a48" stroke-width="2.200" fill="none" opacity="0.450"/>
<ellipse cx="40.700" cy="21.900" rx="3.500" ry="3.100" fill="#94705f"/>
<ellipse cx="41.300" cy="22.300" rx="2.100" ry="1.900" fill="#a98576"/>
<ellipse cx="50.700" cy="28.400" rx="4" ry="2.500" fill="#dd9f98" opacity="0.900"/>
<ellipse cx="64.600" cy="25.600" rx="2.300" ry="2" fill="#dd9f98" opacity="0.850"/>
<ellipse cx="70" cy="23" rx="2.400" ry="1.800" fill="#e0a39c" opacity="0.850"/>
<path d="M53 25.600 Q55 24 57 25.300" stroke="#4a3328" stroke-width="0.900" fill="none" stroke-linecap="round"/>
<path d="M66 21.600 Q67 20.800 68 21.500" stroke="#4a3328" stroke-width="0.800" fill="none" stroke-linecap="round"/>
<path d="M62.500 29 Q63.500 30.500 64.800 29.200 Q65.800 30.300 67 28.800" stroke="#7a5546" stroke-width="0.600" fill="none"/>
<path d="M74 22.500 L78 21.300 M74.300 25 L78 26.300" stroke="#d8d2cc" stroke-width="0.400" fill="none"/>
<ellipse cx="56.500" cy="38.300" rx="3.200" ry="1.700" fill="#dca794" transform="rotate(12 56.500 38.300)"/>
<ellipse cx="72.300" cy="32.800" rx="2.200" ry="1.700" fill="#dca794"/>
<!-- rim (front) -->
<path d="M6.800 27.600 Q7.500 38.500 38 41 Q70 42.500 73.900 31.400" fill="none" stroke="#e6e8ea" stroke-width="1.100"/>
<path d="M6.800 28.800 Q8 39.800 38 42.200 Q70 43.700 73.900 32.600" fill="none" stroke="#7d8288" stroke-width="1.100"/>
<!-- lid -->
<g transform="rotate(9.500 44 14)">
<ellipse cx="44" cy="14.300" rx="31" ry="5.400" fill="#5f646a"/>
<ellipse cx="43.600" cy="12.600" rx="30.500" ry="4.600" fill="url(#lid)"/>
<path d="M16 11.400 Q30 7.600 58 9.800" stroke="#d5d8da" stroke-width="0.900" fill="none" opacity="0.900"/>
</g>
</g>
</svg>
<!-- selection -->
<svg style="left:709px;top:468px" width="90" height="74" viewBox="0 0 90 74">
<rect x="5.800" y="6.700" width="75.300" height="60.200" fill="none" stroke="#1e90ff" stroke-width="1.500" stroke-dasharray="4 3.200"/>
<g fill="#fff" stroke="#8ec5ff" stroke-width="1"><rect x="3.200" y="4.100" width="5.200" height="5.200"/><rect x="40.800" y="4.100" width="5.200" height="5.200"/><rect x="78.500" y="4.100" width="5.200" height="5.200"/><rect x="3.200" y="34.200" width="5.200" height="5.200"/><rect x="78.500" y="34.200" width="5.200" height="5.200"/><rect x="3.200" y="64.300" width="5.200" height="5.200"/><rect x="40.800" y="64.300" width="5.200" height="5.200"/></g>
</svg>
<!-- resize cursor -->
<svg style="left:776px;top:519px" width="44" height="44" viewBox="0 0 44 44">
<g transform="translate(22.150 22) rotate(45)"><path d="M-22.200 0 L-13.200 9 V2.550 H13.200 V9 L22.200 0 L13.200 -9 V-2.550 H-13.200 V-9 Z" fill="#e6abab" stroke="#000" stroke-width="2.200" stroke-linejoin="miter"/></g>
</svg>

<!-- scrollbar -->
<div id="sbar"></div>
<svg style="left:1268px;top:198px" width="9" height="7" viewBox="0 0 9 7"><path d="M4.500 1 L8.200 6 H0.800 Z" fill="#8b8b8b" stroke="#8b8b8b" stroke-width="0.800" stroke-linejoin="round"/></svg>
<div id="sthumb"></div>
<svg style="left:1268px;top:789px" width="9" height="7" viewBox="0 0 9 7"><path d="M4.500 6 L8.200 1 H0.800 Z" fill="#8b8b8b" stroke="#8b8b8b" stroke-width="0.800" stroke-linejoin="round"/></svg>

<!-- floating -->
<div id="chat"><svg style="left:19.500px;top:9px" width="19" height="19" viewBox="0 0 19 19"><path d="M1.300 1 H17.700 V13.800 H4.800 L1.300 17.300 Z" fill="none" stroke="#666" stroke-width="1.700" stroke-linejoin="round"/><path d="M4.300 4.800 H14.700 M4.300 7.500 H14.700 M4.300 10.200 H14.700" stroke="#666" stroke-width="1.500"/></svg><span>跟開發者說⋯</span></div>
<div id="count">1 / 1 · 141 字</div>
</body>
</html>
